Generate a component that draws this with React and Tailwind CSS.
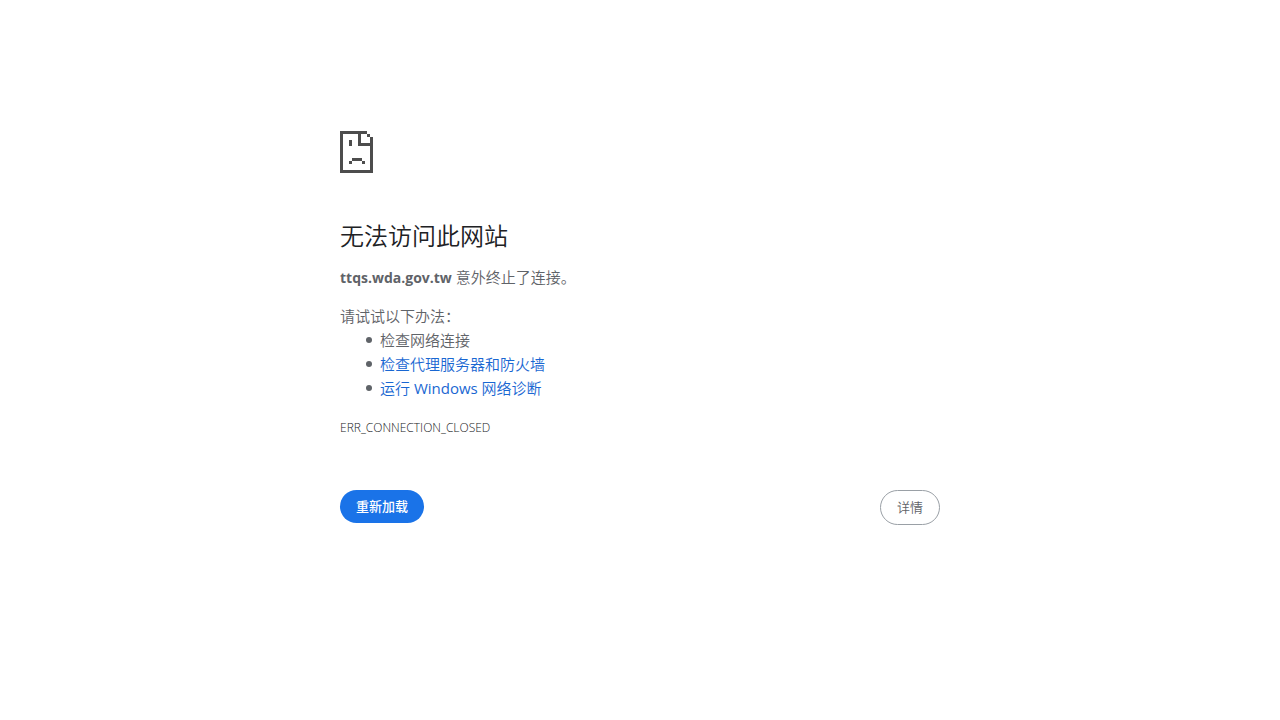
const linkClass = "text-[#1967d2] hover:underline";
const itemClass =
  "flex items-center gap-2 before:size-1.5 before:rounded-full before:bg-[#5f6368] before:content-['']";

function SadPageIcon() {
  return (
    <svg
      width="33"
      height="42"
      viewBox="0 0 33 42"
      fill="#4d4d4d"
      shapeRendering="crispEdges"
      aria-hidden="true"
    >
      <path d="M0 0H27V3H21V12H33V42H0ZM3 3V39H30V15H18V3Z" fillRule="evenodd" />
      <path d="M27 3h3v3h-3zM30 6h3v6h-3z" />
      <path d="M9 9h3v6H9zM12 27h10v3H12zM9 30h3v3H9zM22 30h3v3h-3z" />
    </svg>
  );
}

export default function App() {
  return (
    <main className="min-h-screen bg-white font-['Open_Sans','Noto_Sans_CJK_SC',sans-serif] text-[15px] leading-6 font-[350] text-[#5f6368]">
      <div className="mx-auto max-w-[600px] pt-[131px]">
        <SadPageIcon />
        <h1 className="mt-12 text-2xl leading-[30px] text-[#202124]">无法访问此网站</h1>
        <p className="mt-3.5">
          <strong className="text-sm leading-6 font-bold">ttqs.wda.gov.tw</strong> 意外终止了连接。
        </p>
        <p className="mt-3.5">请试试以下办法：</p>
        <ul className="pl-[26px]">
          <li className={itemClass}>检查网络连接</li>
          <li className={itemClass}>
            <a href="#proxy" className={linkClass}>检查代理服务器和防火墙</a>
          </li>
          <li className={itemClass}>
            <a href="#diagnostics" className={linkClass}>
              运行 <span className="font-normal">Windows</span> 网络诊断
            </a>
          </li>
        </ul>
        <p className="mt-4 text-xs leading-6 font-light text-[#202124]">ERR_CONNECTION_CLOSED</p>
        <div className="mt-[50px] flex items-start justify-between">
          <button type="button" className="rounded-full bg-[#1a73e8] px-4 py-2 text-[13px] leading-[17px] font-medium text-white">
            重新加载
          </button>
          <button type="button" className="rounded-full border border-[#9aa0a6] px-4 py-2 text-[13px] leading-[17px] font-[350]">
            详情
          </button>
        </div>
      </div>
    </main>
  );
}
